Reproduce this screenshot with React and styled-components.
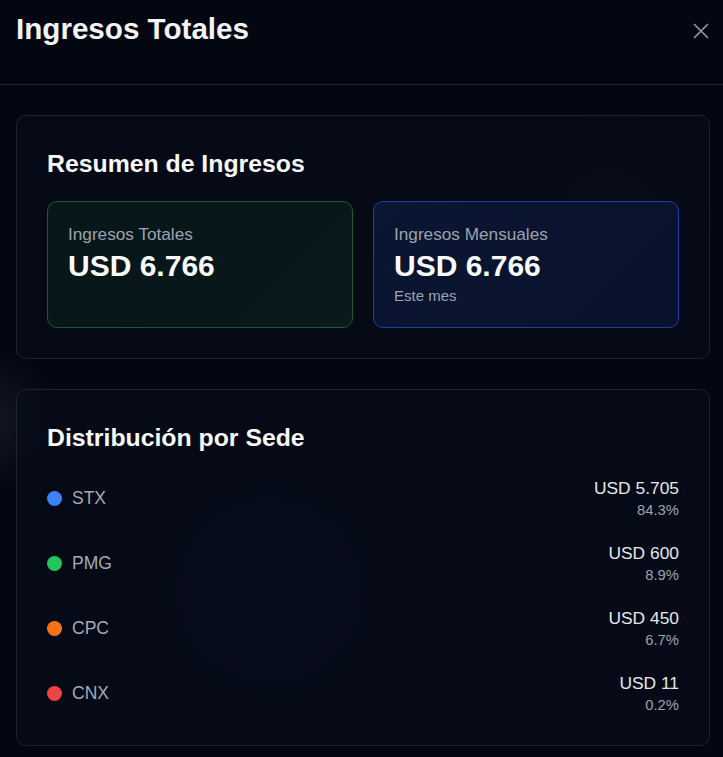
import React from "react";
import styled, { createGlobalStyle } from "styled-components";

const Global = createGlobalStyle`
  html, body { margin: 0; padding: 0; }
  body {
    background: #030712;
    font-family: "Liberation Sans", Arial, sans-serif;
    -webkit-font-smoothing: antialiased;
  }
`;

const Page = styled.div`
  width: 723px;
  min-height: 757px;
  box-sizing: border-box;
  background:
    radial-gradient(circle at 270px 590px, rgba(30, 41, 90, 0.22) 0, rgba(30, 41, 90, 0.12) 90px, rgba(3, 7, 18, 0) 125px),
    radial-gradient(circle at 610px 220px, rgba(40, 50, 70, 0.18) 0, rgba(3, 7, 18, 0) 110px),
    radial-gradient(circle at -10px 420px, rgba(60, 70, 90, 0.25) 0, rgba(3, 7, 18, 0) 70px),
    #030712;
  overflow: hidden;
`;

const Header = styled.header`
  display: flex;
  align-items: flex-start;
  justify-content: space-between;
  height: 85px;
  box-sizing: border-box;
  padding: 12px 14px 0 16px;
  border-bottom: 1px solid #1c2333;
`;

const Title = styled.h1`
  margin: 0;
  font-size: 29.6px;
  line-height: 34px;
  font-weight: 700;
  color: #f3f4f6;
`;

const Close = styled.button`
  background: none;
  border: none;
  padding: 0;
  margin-top: 11px;
  width: 16px;
  height: 16px;
  color: #8e95a3;
  display: flex;
  cursor: pointer;
`;

const Body = styled.main`
  display: flex;
  flex-direction: column;
  gap: 30px;
  padding: 30px 13px 12px 16px;
`;

const Panel = styled.section`
  border: 1px solid #1c2333;
  border-radius: 10px;
  background: rgba(8, 12, 26, 0.55);
  padding: 32px 30px 30px;
`;

const PanelTitle = styled.h2`
  margin: 0 0 ${(p) => p.$gap}px;
  font-size: 24.8px;
  line-height: 32px;
  font-weight: 700;
  color: #f9fafb;
`;

const StatGrid = styled.div`
  display: grid;
  grid-template-columns: 1fr 1fr;
  gap: 20px;
`;

const StatCard = styled.div`
  border-radius: 10px;
  padding: 20px 20px 21px;
  border: 1px solid ${(p) => (p.$tone === "green" ? "#1b5a37" : "#1f3fa6")};
  background: ${(p) =>
    p.$tone === "green"
      ? "linear-gradient(135deg, #07171a 0%, #081719 70%, #0b1a1c 100%)"
      : "linear-gradient(135deg, #0b1632 0%, #09122c 100%)"};
`;

const StatLabel = styled.div`
  font-size: 17.2px;
  line-height: 24px;
  color: #9ca3af;
`;

const StatValue = styled.div`
  font-size: 30px;
  line-height: 40px;
  font-weight: 700;
  color: #f9fafb;
`;

const StatNote = styled.div`
  font-size: 15px;
  line-height: 20px;
  color: #9ca3af;
`;

const List = styled.div`
  display: flex;
  flex-direction: column;
  gap: 21px;
`;

const Row = styled.div`
  display: flex;
  align-items: center;
  justify-content: space-between;
`;

const Site = styled.div`
  display: flex;
  align-items: center;
  gap: 10px;
  font-size: 17.5px;
  color: #a3a9b5;
`;

const Dot = styled.span`
  width: 15px;
  height: 15px;
  border-radius: 50%;
  background: ${(p) => p.$color};
  flex: none;
`;

const Amounts = styled.div`
  display: flex;
  flex-direction: column;
  align-items: flex-end;
`;

const Amount = styled.div`
  font-size: 17.4px;
  line-height: 24px;
  color: #e5e7eb;
`;

const Pct = styled.div`
  font-size: 14.8px;
  line-height: 20px;
  color: #9ca3af;
`;

const sites = [
  { name: "STX", color: "#3b82f6", amount: "USD 5.705", pct: "84.3%" },
  { name: "PMG", color: "#22c55e", amount: "USD 600", pct: "8.9%" },
  { name: "CPC", color: "#f97316", amount: "USD 450", pct: "6.7%" },
  { name: "CNX", color: "#ef4444", amount: "USD 11", pct: "0.2%" },
];

export default function App() {
  return (
    <Page>
      <Global />
      <Header>
        <Title>Ingresos Totales</Title>
        <Close aria-label="Cerrar">
          <svg width="16" height="16" viewBox="0 0 16 16" fill="none" stroke="currentColor" strokeWidth="1.7" strokeLinecap="round">
            <path d="M1.5 1.5 L14.5 14.5 M14.5 1.5 L1.5 14.5" />
          </svg>
        </Close>
      </Header>
      <Body>
        <Panel>
          <PanelTitle $gap={21}>Resumen de Ingresos</PanelTitle>
          <StatGrid>
            <StatCard $tone="green">
              <StatLabel>Ingresos Totales</StatLabel>
              <StatValue>USD 6.766</StatValue>
            </StatCard>
            <StatCard $tone="blue">
              <StatLabel>Ingresos Mensuales</StatLabel>
              <StatValue>USD 6.766</StatValue>
              <StatNote>Este mes</StatNote>
            </StatCard>
          </StatGrid>
        </Panel>
        <Panel>
          <PanelTitle $gap={22}>Distribución por Sede</PanelTitle>
          <List>
            {sites.map((s) => (
              <Row key={s.name}>
                <Site>
                  <Dot $color={s.color} />
                  {s.name}
                </Site>
                <Amounts>
                  <Amount>{s.amount}</Amount>
                  <Pct>{s.pct}</Pct>
                </Amounts>
              </Row>
            ))}
          </List>
        </Panel>
      </Body>
    </Page>
  );
}
